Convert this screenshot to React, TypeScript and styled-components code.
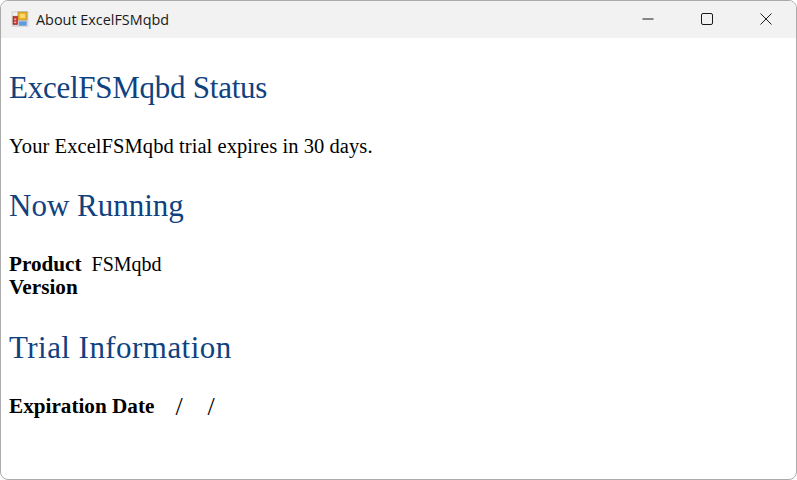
import styled, { createGlobalStyle } from "styled-components";

const GlobalStyle = createGlobalStyle`
    html, body {
        margin: 0;
        padding: 0;
        background: #ffffff;
    }
`

function AppIcon() {
    return (
        <svg width="18" height="18" viewBox="0 0 18 18">
            <rect x="0.5" y="1" width="17" height="16" fill="#d9d9d9" />
            <rect x="2" y="2.5" width="5" height="3" fill="#f2f2f2" />
            <rect x="7" y="2" width="9" height="8" fill="#f0b323" stroke="#a8894a" strokeWidth="0.7" />
            <rect x="9" y="4" width="5" height="4" fill="#fbd969" />
            <rect x="2" y="6.5" width="4.5" height="8" fill="#c8302c" stroke="#8d2a28" strokeWidth="0.6" />
            <rect x="3.2" y="8.5" width="2" height="1.6" fill="#f4b9b0" />
            <rect x="3.2" y="11.5" width="2" height="1.6" fill="#f4b9b0" />
            <rect x="8" y="11.5" width="7.5" height="4" fill="#5b9be6" stroke="#7da3cf" strokeWidth="0.5" />
        </svg>
    )
}

function App() {
    return (
        <>
            <GlobalStyle />
            <Window>
                <TitleBar>
                    <TitleGroup>
                        <AppIcon />
                        <TitleText>About ExcelFSMqbd</TitleText>
                    </TitleGroup>
                    <Controls>
                        <ControlButton>
                            <svg width="12" height="12" viewBox="0 0 12 12">
                                <path d="M0.5 6H11.5" stroke="#1a1a1a" strokeWidth="1" fill="none" />
                            </svg>
                        </ControlButton>
                        <ControlButton>
                            <svg width="12" height="12" viewBox="0 0 12 12">
                                <rect x="0.5" y="0.5" width="11" height="11" rx="1.5" stroke="#1a1a1a" strokeWidth="1" fill="none" />
                            </svg>
                        </ControlButton>
                        <ControlButton>
                            <svg width="12" height="12" viewBox="0 0 12 12">
                                <path d="M0.5 0.5L11.5 11.5M11.5 0.5L0.5 11.5" stroke="#1a1a1a" strokeWidth="1" fill="none" />
                            </svg>
                        </ControlButton>
                    </Controls>
                </TitleBar>
                <Content>
                    <Heading $spacing={-0.25}>ExcelFSMqbd Status</Heading>
                    <BodyText>Your ExcelFSMqbd trial expires in 30 days.</BodyText>
                    <Heading $spacing={0}>Now Running</Heading>
                    <InfoBlock>
                        <InfoRow>
                            <Label>Product</Label>
                            <Value>FSMqbd</Value>
                        </InfoRow>
                        <InfoRow>
                            <Label>Version</Label>
                        </InfoRow>
                    </InfoBlock>
                    <Heading $spacing={0.45}>Trial Information</Heading>
                    <InfoBlock>
                        <InfoRow>
                            <Label>Expiration Date</Label>
                            <DateValue>
                                <span>/</span>
                                <span>/</span>
                            </DateValue>
                        </InfoRow>
                    </InfoBlock>
                </Content>
            </Window>
        </>
    )
}

const Window = styled.div`
    box-sizing: border-box;
    width: 797px;
    height: 480px;
    background: #ffffff;
    border: 1px solid #ababab;
    border-radius: 8px;
    overflow: hidden;
    display: flex;
    flex-direction: column;
`

const TitleBar = styled.div`
    height: 37px;
    flex-shrink: 0;
    background: #f2f2f2;
    display: flex;
    align-items: center;
    justify-content: space-between;
`

const TitleGroup = styled.div`
    display: flex;
    align-items: center;
    gap: 7px;
    padding: 0 0 1px 10px;
`

const TitleText = styled.span`
    font-family: "Open Sans", "Noto Sans", sans-serif;
    font-size: 14.4px;
    color: #1a1a1a;
`

const Controls = styled.div`
    display: flex;
    padding-right: 1px;
`

const ControlButton = styled.div`
    box-sizing: border-box;
    width: 59px;
    height: 37px;
    padding-bottom: 2px;
    display: flex;
    align-items: center;
    justify-content: center;
`

const Content = styled.div`
    padding: 32px 8px 0;
    font-family: "Liberation Serif", "DejaVu Serif", serif;
`

const Heading = styled.h2<{ $spacing: number }>`
    margin: 0;
    height: 36px;
    line-height: 36px;
    font-size: 31px;
    font-weight: 400;
    letter-spacing: ${(p) => p.$spacing}px;
    color: #10427f;
`

const BodyText = styled.p`
    margin: 28px 0 30px;
    font-size: 20.5px;
    letter-spacing: 0.07px;
    line-height: 24px;
    color: #000000;
`

const InfoBlock = styled.div`
    margin: 29px 0 31px;
`

const InfoRow = styled.div`
    display: flex;
    height: 23px;
    line-height: 23px;
    font-size: 20px;
    color: #000000;
`

const Label = styled.span`
    font-size: 21.2px;
    font-weight: 700;
    margin-right: 10px;
`

const Value = styled.span`
    font-weight: 400;
`

const DateValue = styled.span`
    display: flex;
    gap: 25px;
    margin-left: 11px;
    font-size: 26px;
`

export default App;
